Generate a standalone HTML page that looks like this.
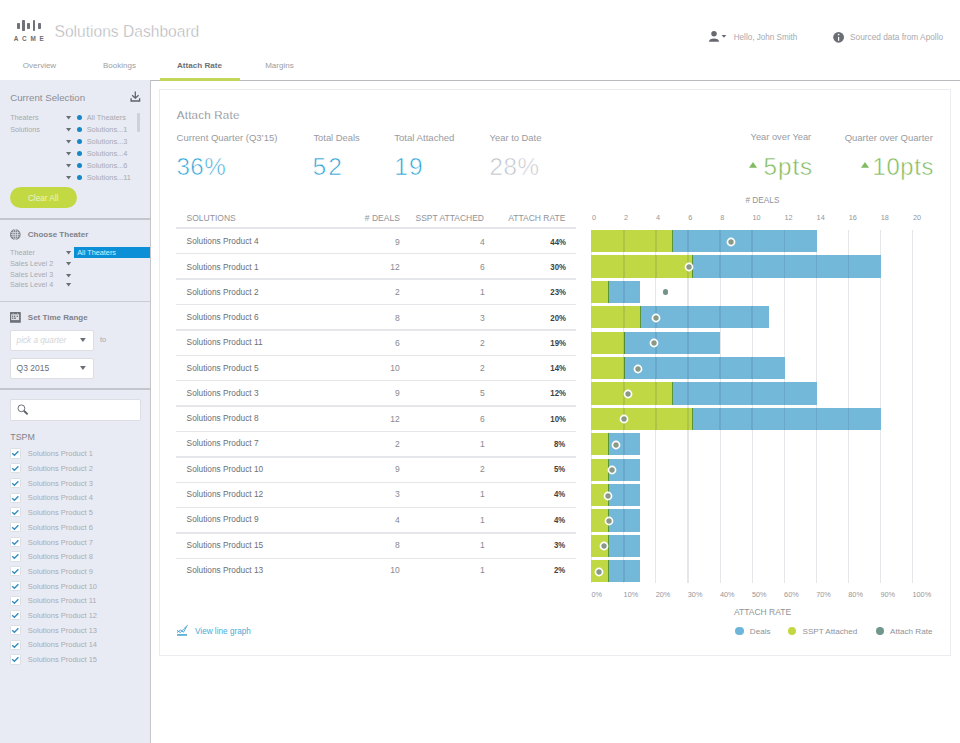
<!DOCTYPE html>
<html><head><meta charset="utf-8"><title>Solutions Dashboard</title>
<style>
html,body{margin:0;padding:0;}
body{width:960px;height:743px;position:relative;overflow:hidden;background:#fff;font-family:"Liberation Sans", sans-serif;}
.t{position:absolute;white-space:nowrap;}
</style></head><body>
<div style="position:absolute;left:17.1px;top:22.5px;width:2.7px;height:6.300000000000001px;background:#707379;border-radius:0.8px;"></div>
<div style="position:absolute;left:22.3px;top:20px;width:2.7px;height:11.3px;background:#707379;border-radius:0.8px;"></div>
<div style="position:absolute;left:27.4px;top:22.5px;width:2.7px;height:6.300000000000001px;background:#707379;border-radius:0.8px;"></div>
<div style="position:absolute;left:32.7px;top:20px;width:2.7px;height:11.3px;background:#707379;border-radius:0.8px;"></div>
<div style="position:absolute;left:37.9px;top:22.5px;width:2.7px;height:6.300000000000001px;background:#707379;border-radius:0.8px;"></div>
<div class="t" style="left:13.70px;top:36.19px;font-size:6.4px;line-height:6.4px;color:#6b6e75;font-weight:700;letter-spacing:3.75px;">ACME</div>
<div class="t" style="left:54.50px;top:24.12px;font-size:15.6px;line-height:15.6px;color:#a9abb2;font-weight:400;-webkit-text-stroke:0.45px #fff;">Solutions Dashboard</div>
<svg style="position:absolute;left:706px;top:29px" width="24" height="15" viewBox="0 0 24 15"><circle cx="8" cy="4.8" r="2.75" fill="#66696f"/><path d="M3 12.7 C3 10.4 5.2 9.5 8 9.5 C10.8 9.5 13 10.4 13 12.7 Z" fill="#66696f"/><path d="M15.6 6 L20.3 6 L17.95 8.8 Z" fill="#66696f"/></svg>
<div class="t" style="left:733.70px;top:34.01px;font-size:8.15px;line-height:8.15px;color:#a7aaaf;font-weight:400;">Hello, John Smith</div>
<svg style="position:absolute;left:832px;top:31px" width="13" height="13" viewBox="0 0 13 13"><circle cx="6.6" cy="6.3" r="5.4" fill="#6b6e75"/><circle cx="6.6" cy="3.5" r="0.85" fill="#fff"/><rect x="6.0" y="5.9" width="1.2" height="3.9" fill="#fff"/></svg>
<div class="t" style="left:850.00px;top:32.89px;font-size:8.3px;line-height:8.3px;color:#a7aaaf;font-weight:400;">Sourced data from Apollo</div>
<div class="t" style="left:22.80px;top:62.24px;font-size:8px;line-height:8px;color:#9b9ea4;font-weight:400;">Overview</div>
<div class="t" style="left:103.00px;top:62.24px;font-size:8px;line-height:8px;color:#9b9ea4;font-weight:400;">Bookings</div>
<div class="t" style="left:177.00px;top:62.16px;font-size:8.1px;line-height:8.1px;color:#6d7077;font-weight:700;">Attach Rate</div>
<div class="t" style="left:265.20px;top:62.24px;font-size:8px;line-height:8px;color:#9b9ea4;font-weight:400;">Margins</div>
<div style="position:absolute;left:150px;top:80px;width:810px;height:1px;background:#b9bbbf;"></div>
<div style="position:absolute;left:160px;top:78px;width:80px;height:3px;background:#c2d65a;"></div>
<div style="position:absolute;left:0px;top:80px;width:150px;height:663px;background:#e8ebf3;"></div>
<div style="position:absolute;left:150px;top:80px;width:1px;height:663px;background:#c3c5cb;"></div>
<div class="t" style="left:10.20px;top:92.70px;font-size:9.7px;line-height:9.7px;color:#8b8e95;font-weight:400;">Current Selection</div>
<svg style="position:absolute;left:129px;top:91px" width="14" height="12" viewBox="0 0 14 12"><path d="M6.3 0.4 V7.1 M3.1 4.3 L6.3 7.2 L9.6 4.3" stroke="#5f6269" stroke-width="1.25" fill="none"/><path d="M2.1 7.3 V10 H10.6 V7.3" stroke="#5f6269" stroke-width="1.35" fill="none"/></svg>
<div class="t" style="left:10.20px;top:113.62px;font-size:7.2px;line-height:7.2px;color:#a7aab1;font-weight:400;">Theaters</div>
<svg style="position:absolute;left:66px;top:115.90px" width="6" height="4" viewBox="0 0 6 4"><path d="M0 0 H5.2 L2.6 3.5 Z" fill="#6b6e75"/></svg>
<div style="position:absolute;left:77.2px;top:114.60px;width:5px;height:5px;border-radius:50%;background:#1586c8"></div>
<div class="t" style="left:86.70px;top:114.05px;font-size:7.4px;line-height:7.4px;color:#a7aab1;font-weight:400;">All Theaters</div>
<div class="t" style="left:10.20px;top:125.62px;font-size:7.2px;line-height:7.2px;color:#a7aab1;font-weight:400;">Solutions</div>
<svg style="position:absolute;left:66px;top:127.90px" width="6" height="4" viewBox="0 0 6 4"><path d="M0 0 H5.2 L2.6 3.5 Z" fill="#6b6e75"/></svg>
<div style="position:absolute;left:77.2px;top:126.60px;width:5px;height:5px;border-radius:50%;background:#1586c8"></div>
<div class="t" style="left:86.70px;top:126.05px;font-size:7.4px;line-height:7.4px;color:#a7aab1;font-weight:400;">Solutions...1</div>
<svg style="position:absolute;left:66px;top:139.90px" width="6" height="4" viewBox="0 0 6 4"><path d="M0 0 H5.2 L2.6 3.5 Z" fill="#6b6e75"/></svg>
<div style="position:absolute;left:77.2px;top:138.60px;width:5px;height:5px;border-radius:50%;background:#1586c8"></div>
<div class="t" style="left:86.70px;top:138.05px;font-size:7.4px;line-height:7.4px;color:#a7aab1;font-weight:400;">Solutions...3</div>
<svg style="position:absolute;left:66px;top:151.90px" width="6" height="4" viewBox="0 0 6 4"><path d="M0 0 H5.2 L2.6 3.5 Z" fill="#6b6e75"/></svg>
<div style="position:absolute;left:77.2px;top:150.60px;width:5px;height:5px;border-radius:50%;background:#1586c8"></div>
<div class="t" style="left:86.70px;top:150.05px;font-size:7.4px;line-height:7.4px;color:#a7aab1;font-weight:400;">Solutions...4</div>
<svg style="position:absolute;left:66px;top:163.90px" width="6" height="4" viewBox="0 0 6 4"><path d="M0 0 H5.2 L2.6 3.5 Z" fill="#6b6e75"/></svg>
<div style="position:absolute;left:77.2px;top:162.60px;width:5px;height:5px;border-radius:50%;background:#1586c8"></div>
<div class="t" style="left:86.70px;top:162.05px;font-size:7.4px;line-height:7.4px;color:#a7aab1;font-weight:400;">Solutions...6</div>
<svg style="position:absolute;left:66px;top:175.90px" width="6" height="4" viewBox="0 0 6 4"><path d="M0 0 H5.2 L2.6 3.5 Z" fill="#6b6e75"/></svg>
<div style="position:absolute;left:77.2px;top:174.60px;width:5px;height:5px;border-radius:50%;background:#1586c8"></div>
<div class="t" style="left:86.70px;top:174.05px;font-size:7.4px;line-height:7.4px;color:#a7aab1;font-weight:400;">Solutions...11</div>
<div style="position:absolute;left:137.2px;top:113px;width:2.6px;height:19px;background:#cfd1d6;border-radius:1px;"></div>
<div style="position:absolute;left:9.7px;top:187px;width:67px;height:21px;background:#c3d944;border-radius:11px;"></div>
<div class="t" style="left:-156.80px;width:400px;text-align:center;top:195.07px;font-size:8.2px;line-height:8.2px;color:#eef3c2;font-weight:400;">Clear All</div>
<div style="position:absolute;left:0px;top:218px;width:150px;height:2px;background:#c3c6cd;"></div>
<svg style="position:absolute;left:9px;top:228px" width="13" height="13" viewBox="0 0 13 13"><circle cx="6.3" cy="6.4" r="5.3" fill="#777a81"/><path d="M2.2 4.6 H10.4 M1.6 6.4 H11 M2.2 8.2 H10.4 M6.3 1.2 V11.6" stroke="#e8ebf3" stroke-width="0.7" fill="none"/><ellipse cx="6.3" cy="6.4" rx="2.4" ry="5" stroke="#e8ebf3" stroke-width="0.7" fill="none"/></svg>
<div class="t" style="left:27.80px;top:231.14px;font-size:8px;line-height:8px;color:#7f828a;font-weight:700;">Choose Theater</div>
<div style="position:absolute;left:74px;top:247px;width:76px;height:11px;background:#0b8fd6;"></div>
<div class="t" style="left:77.20px;top:249.03px;font-size:7.3px;line-height:7.3px;color:#d2effc;font-weight:400;">All Theaters</div>
<div class="t" style="left:10.00px;top:248.72px;font-size:7.2px;line-height:7.2px;color:#a7aab1;font-weight:400;">Theater</div>
<svg style="position:absolute;left:66px;top:251.00px" width="6" height="4" viewBox="0 0 6 4"><path d="M0 0 H5.2 L2.6 3.5 Z" fill="#6b6e75"/></svg>
<div class="t" style="left:10.00px;top:259.52px;font-size:7.2px;line-height:7.2px;color:#a7aab1;font-weight:400;">Sales Level 2</div>
<svg style="position:absolute;left:66px;top:261.80px" width="6" height="4" viewBox="0 0 6 4"><path d="M0 0 H5.2 L2.6 3.5 Z" fill="#6b6e75"/></svg>
<div class="t" style="left:10.00px;top:271.32px;font-size:7.2px;line-height:7.2px;color:#a7aab1;font-weight:400;">Sales Level 3</div>
<svg style="position:absolute;left:66px;top:273.60px" width="6" height="4" viewBox="0 0 6 4"><path d="M0 0 H5.2 L2.6 3.5 Z" fill="#6b6e75"/></svg>
<div class="t" style="left:10.00px;top:280.52px;font-size:7.2px;line-height:7.2px;color:#a7aab1;font-weight:400;">Sales Level 4</div>
<svg style="position:absolute;left:66px;top:282.80px" width="6" height="4" viewBox="0 0 6 4"><path d="M0 0 H5.2 L2.6 3.5 Z" fill="#6b6e75"/></svg>
<div style="position:absolute;left:0px;top:300.5px;width:150px;height:1.5px;background:#c8cbd2;"></div>
<svg style="position:absolute;left:10px;top:311.75px" width="11" height="11" viewBox="0 0 11 11"><rect x="0" y="0" width="10.8" height="10.75" rx="0.6" fill="#6d7077"/><rect x="1.2" y="2.3" width="7.9" height="5.8" fill="#dfe1e7"/><rect x="2.0" y="3.6" width="1.3" height="1.3" fill="#6d7077"/><rect x="4.0" y="3.6" width="1.3" height="1.3" fill="#6d7077"/><rect x="6.6" y="3.6" width="1.3" height="1.3" fill="#6d7077"/><rect x="2.0" y="5.6" width="1.3" height="1.3" fill="#6d7077"/><rect x="4.0" y="5.6" width="2.0" height="1.2" fill="#6d7077"/><rect x="2.8" y="0.9" width="0.8" height="1.0" fill="#b9bcc2"/><rect x="7.2" y="0.9" width="0.8" height="1.0" fill="#b9bcc2"/></svg>
<div class="t" style="left:27.80px;top:313.84px;font-size:8px;line-height:8px;color:#7f828a;font-weight:700;">Set Time Range</div>
<div style="position:absolute;left:10px;top:329.5px;width:83.5px;height:21px;background:#ffffff;border:1px solid #dcdee3;box-sizing:border-box;border-radius:2px;"></div>
<div class="t" style="left:16.60px;top:337.07px;font-size:8.2px;line-height:8.2px;color:#d3d4d8;font-weight:400;font-style:italic;">pick a quarter</div>
<svg style="position:absolute;left:80.4px;top:338px" width="6" height="5" viewBox="0 0 6 5"><path d="M0 0 H5.8 L2.9 4 Z" fill="#6b6e75"/></svg>
<div class="t" style="left:100.00px;top:335.86px;font-size:7.5px;line-height:7.5px;color:#a7aab1;font-weight:400;">to</div>
<div style="position:absolute;left:10px;top:357.5px;width:83.5px;height:21px;background:#ffffff;border:1px solid #dcdee3;box-sizing:border-box;border-radius:2px;"></div>
<div class="t" style="left:16.60px;top:364.02px;font-size:8.5px;line-height:8.5px;color:#6b6e75;font-weight:400;">Q3 2015</div>
<svg style="position:absolute;left:80.4px;top:366px" width="6" height="5" viewBox="0 0 6 5"><path d="M0 0 H5.8 L2.9 4 Z" fill="#6b6e75"/></svg>
<div style="position:absolute;left:0px;top:388px;width:150px;height:2px;background:#c3c6cd;"></div>
<div style="position:absolute;left:10px;top:399px;width:130.5px;height:21.5px;background:#ffffff;border:1px solid #dcdee3;box-sizing:border-box;border-radius:2px;"></div>
<svg style="position:absolute;left:16px;top:404px" width="13" height="12" viewBox="0 0 13 12"><circle cx="5.4" cy="4.3" r="3.4" stroke="#5e6168" stroke-width="0.9" fill="none"/><path d="M7.9 6.8 L11.6 10.4" stroke="#5e6168" stroke-width="1.9"/></svg>
<div class="t" style="left:10.30px;top:432.82px;font-size:8.85px;line-height:8.85px;color:#7f828a;font-weight:400;">TSPM</div>
<div style="position:absolute;left:10.1px;top:448.40000000000003px;width:10.6px;height:10.2px;background:#ffffff;border:1px solid #dcdee4;box-sizing:border-box;border-radius:1.5px;"></div>
<svg style="position:absolute;left:10.3px;top:448.40px" width="10" height="10" viewBox="0 0 10 10"><path d="M2.2 5.2 L4.4 7.3 L8.4 3.2" stroke="#2e8cc0" stroke-width="1.3" fill="none"/></svg>
<div class="t" style="left:27.80px;top:450.26px;font-size:7.5px;line-height:7.5px;color:#a9acb3;font-weight:400;">Solutions Product 1</div>
<div style="position:absolute;left:10.1px;top:463.11px;width:10.6px;height:10.2px;background:#ffffff;border:1px solid #dcdee4;box-sizing:border-box;border-radius:1.5px;"></div>
<svg style="position:absolute;left:10.3px;top:463.11px" width="10" height="10" viewBox="0 0 10 10"><path d="M2.2 5.2 L4.4 7.3 L8.4 3.2" stroke="#2e8cc0" stroke-width="1.3" fill="none"/></svg>
<div class="t" style="left:27.80px;top:464.97px;font-size:7.5px;line-height:7.5px;color:#a9acb3;font-weight:400;">Solutions Product 2</div>
<div style="position:absolute;left:10.1px;top:477.82000000000005px;width:10.6px;height:10.2px;background:#ffffff;border:1px solid #dcdee4;box-sizing:border-box;border-radius:1.5px;"></div>
<svg style="position:absolute;left:10.3px;top:477.82px" width="10" height="10" viewBox="0 0 10 10"><path d="M2.2 5.2 L4.4 7.3 L8.4 3.2" stroke="#2e8cc0" stroke-width="1.3" fill="none"/></svg>
<div class="t" style="left:27.80px;top:479.68px;font-size:7.5px;line-height:7.5px;color:#a9acb3;font-weight:400;">Solutions Product 3</div>
<div style="position:absolute;left:10.1px;top:492.53000000000003px;width:10.6px;height:10.2px;background:#ffffff;border:1px solid #dcdee4;box-sizing:border-box;border-radius:1.5px;"></div>
<svg style="position:absolute;left:10.3px;top:492.53px" width="10" height="10" viewBox="0 0 10 10"><path d="M2.2 5.2 L4.4 7.3 L8.4 3.2" stroke="#2e8cc0" stroke-width="1.3" fill="none"/></svg>
<div class="t" style="left:27.80px;top:494.39px;font-size:7.5px;line-height:7.5px;color:#a9acb3;font-weight:400;">Solutions Product 4</div>
<div style="position:absolute;left:10.1px;top:507.24000000000007px;width:10.6px;height:10.2px;background:#ffffff;border:1px solid #dcdee4;box-sizing:border-box;border-radius:1.5px;"></div>
<svg style="position:absolute;left:10.3px;top:507.24px" width="10" height="10" viewBox="0 0 10 10"><path d="M2.2 5.2 L4.4 7.3 L8.4 3.2" stroke="#2e8cc0" stroke-width="1.3" fill="none"/></svg>
<div class="t" style="left:27.80px;top:509.10px;font-size:7.5px;line-height:7.5px;color:#a9acb3;font-weight:400;">Solutions Product 5</div>
<div style="position:absolute;left:10.1px;top:521.95px;width:10.6px;height:10.2px;background:#ffffff;border:1px solid #dcdee4;box-sizing:border-box;border-radius:1.5px;"></div>
<svg style="position:absolute;left:10.3px;top:521.95px" width="10" height="10" viewBox="0 0 10 10"><path d="M2.2 5.2 L4.4 7.3 L8.4 3.2" stroke="#2e8cc0" stroke-width="1.3" fill="none"/></svg>
<div class="t" style="left:27.80px;top:523.81px;font-size:7.5px;line-height:7.5px;color:#a9acb3;font-weight:400;">Solutions Product 6</div>
<div style="position:absolute;left:10.1px;top:536.66px;width:10.6px;height:10.2px;background:#ffffff;border:1px solid #dcdee4;box-sizing:border-box;border-radius:1.5px;"></div>
<svg style="position:absolute;left:10.3px;top:536.66px" width="10" height="10" viewBox="0 0 10 10"><path d="M2.2 5.2 L4.4 7.3 L8.4 3.2" stroke="#2e8cc0" stroke-width="1.3" fill="none"/></svg>
<div class="t" style="left:27.80px;top:538.52px;font-size:7.5px;line-height:7.5px;color:#a9acb3;font-weight:400;">Solutions Product 7</div>
<div style="position:absolute;left:10.1px;top:551.37px;width:10.6px;height:10.2px;background:#ffffff;border:1px solid #dcdee4;box-sizing:border-box;border-radius:1.5px;"></div>
<svg style="position:absolute;left:10.3px;top:551.37px" width="10" height="10" viewBox="0 0 10 10"><path d="M2.2 5.2 L4.4 7.3 L8.4 3.2" stroke="#2e8cc0" stroke-width="1.3" fill="none"/></svg>
<div class="t" style="left:27.80px;top:553.23px;font-size:7.5px;line-height:7.5px;color:#a9acb3;font-weight:400;">Solutions Product 8</div>
<div style="position:absolute;left:10.1px;top:566.0799999999999px;width:10.6px;height:10.2px;background:#ffffff;border:1px solid #dcdee4;box-sizing:border-box;border-radius:1.5px;"></div>
<svg style="position:absolute;left:10.3px;top:566.08px" width="10" height="10" viewBox="0 0 10 10"><path d="M2.2 5.2 L4.4 7.3 L8.4 3.2" stroke="#2e8cc0" stroke-width="1.3" fill="none"/></svg>
<div class="t" style="left:27.80px;top:567.94px;font-size:7.5px;line-height:7.5px;color:#a9acb3;font-weight:400;">Solutions Product 9</div>
<div style="position:absolute;left:10.1px;top:580.79px;width:10.6px;height:10.2px;background:#ffffff;border:1px solid #dcdee4;box-sizing:border-box;border-radius:1.5px;"></div>
<svg style="position:absolute;left:10.3px;top:580.79px" width="10" height="10" viewBox="0 0 10 10"><path d="M2.2 5.2 L4.4 7.3 L8.4 3.2" stroke="#2e8cc0" stroke-width="1.3" fill="none"/></svg>
<div class="t" style="left:27.80px;top:582.65px;font-size:7.5px;line-height:7.5px;color:#a9acb3;font-weight:400;">Solutions Product 10</div>
<div style="position:absolute;left:10.1px;top:595.5px;width:10.6px;height:10.2px;background:#ffffff;border:1px solid #dcdee4;box-sizing:border-box;border-radius:1.5px;"></div>
<svg style="position:absolute;left:10.3px;top:595.50px" width="10" height="10" viewBox="0 0 10 10"><path d="M2.2 5.2 L4.4 7.3 L8.4 3.2" stroke="#2e8cc0" stroke-width="1.3" fill="none"/></svg>
<div class="t" style="left:27.80px;top:597.36px;font-size:7.5px;line-height:7.5px;color:#a9acb3;font-weight:400;">Solutions Product 11</div>
<div style="position:absolute;left:10.1px;top:610.21px;width:10.6px;height:10.2px;background:#ffffff;border:1px solid #dcdee4;box-sizing:border-box;border-radius:1.5px;"></div>
<svg style="position:absolute;left:10.3px;top:610.21px" width="10" height="10" viewBox="0 0 10 10"><path d="M2.2 5.2 L4.4 7.3 L8.4 3.2" stroke="#2e8cc0" stroke-width="1.3" fill="none"/></svg>
<div class="t" style="left:27.80px;top:612.07px;font-size:7.5px;line-height:7.5px;color:#a9acb3;font-weight:400;">Solutions Product 12</div>
<div style="position:absolute;left:10.1px;top:624.92px;width:10.6px;height:10.2px;background:#ffffff;border:1px solid #dcdee4;box-sizing:border-box;border-radius:1.5px;"></div>
<svg style="position:absolute;left:10.3px;top:624.92px" width="10" height="10" viewBox="0 0 10 10"><path d="M2.2 5.2 L4.4 7.3 L8.4 3.2" stroke="#2e8cc0" stroke-width="1.3" fill="none"/></svg>
<div class="t" style="left:27.80px;top:626.78px;font-size:7.5px;line-height:7.5px;color:#a9acb3;font-weight:400;">Solutions Product 13</div>
<div style="position:absolute;left:10.1px;top:639.63px;width:10.6px;height:10.2px;background:#ffffff;border:1px solid #dcdee4;box-sizing:border-box;border-radius:1.5px;"></div>
<svg style="position:absolute;left:10.3px;top:639.63px" width="10" height="10" viewBox="0 0 10 10"><path d="M2.2 5.2 L4.4 7.3 L8.4 3.2" stroke="#2e8cc0" stroke-width="1.3" fill="none"/></svg>
<div class="t" style="left:27.80px;top:641.49px;font-size:7.5px;line-height:7.5px;color:#a9acb3;font-weight:400;">Solutions Product 14</div>
<div style="position:absolute;left:10.1px;top:654.3399999999999px;width:10.6px;height:10.2px;background:#ffffff;border:1px solid #dcdee4;box-sizing:border-box;border-radius:1.5px;"></div>
<svg style="position:absolute;left:10.3px;top:654.34px" width="10" height="10" viewBox="0 0 10 10"><path d="M2.2 5.2 L4.4 7.3 L8.4 3.2" stroke="#2e8cc0" stroke-width="1.3" fill="none"/></svg>
<div class="t" style="left:27.80px;top:656.20px;font-size:7.5px;line-height:7.5px;color:#a9acb3;font-weight:400;">Solutions Product 15</div>
<div style="position:absolute;left:159px;top:89px;width:792px;height:567px;background:#ffffff;border:1px solid #ebecef;box-sizing:border-box;"></div>
<div class="t" style="left:176.80px;top:109.30px;font-size:11.6px;line-height:11.6px;color:#737680;font-weight:400;-webkit-text-stroke:0.25px #fff;letter-spacing:0.2px;">Attach Rate</div>
<div class="t" style="left:176.60px;top:133.27px;font-size:9.5px;line-height:9.5px;color:#989ba1;font-weight:400;">Current Quarter (Q3&#8217;15)</div>
<div class="t" style="left:313.40px;top:133.36px;font-size:9.4px;line-height:9.4px;color:#989ba1;font-weight:400;">Total Deals</div>
<div class="t" style="left:394.20px;top:133.19px;font-size:9.6px;line-height:9.6px;color:#989ba1;font-weight:400;">Total Attached</div>
<div class="t" style="left:489.60px;top:133.36px;font-size:9.4px;line-height:9.4px;color:#989ba1;font-weight:400;">Year to Date</div>
<div class="t" style="right:148.80px;top:133.44px;font-size:9.3px;line-height:9.3px;color:#989ba1;font-weight:400;">Year over Year</div>
<div class="t" style="right:27.20px;top:133.27px;font-size:9.5px;line-height:9.5px;color:#989ba1;font-weight:400;">Quarter over Quarter</div>
<div class="t" style="left:176.40px;top:155.45px;font-size:24.2px;line-height:24.2px;color:#2ea3d6;font-weight:400;-webkit-text-stroke:0.65px #fff;letter-spacing:0.5px;">36%</div>
<div class="t" style="left:312.40px;top:155.11px;font-size:24.6px;line-height:24.6px;color:#2ea3d6;font-weight:400;-webkit-text-stroke:0.65px #fff;letter-spacing:2.2px;">52</div>
<div class="t" style="left:394.20px;top:155.11px;font-size:24.6px;line-height:24.6px;color:#2ea3d6;font-weight:400;-webkit-text-stroke:0.65px #fff;letter-spacing:1.2px;">19</div>
<div class="t" style="left:489.50px;top:155.45px;font-size:24.2px;line-height:24.2px;color:#bec1c7;font-weight:400;-webkit-text-stroke:0.65px #fff;letter-spacing:0.6px;">28%</div>
<div class="t" style="left:763.60px;top:154.97px;font-size:24.3px;line-height:24.3px;color:#80bb60;font-weight:400;-webkit-text-stroke:0.5px #fff;letter-spacing:0.9px;">5pts</div>
<div class="t" style="left:872.60px;top:155.39px;font-size:23.8px;line-height:23.8px;color:#80bb60;font-weight:400;-webkit-text-stroke:0.5px #fff;letter-spacing:0.65px;">10pts</div>
<svg style="position:absolute;left:749px;top:162px" width="9" height="6" viewBox="0 0 9 6"><path d="M0 5.8 H8 L4 0 Z" fill="#80bb60"/></svg>
<svg style="position:absolute;left:861.3px;top:162px" width="9" height="6" viewBox="0 0 9 6"><path d="M0 5.8 H8 L4 0 Z" fill="#80bb60"/></svg>
<div class="t" style="left:186.60px;top:214.12px;font-size:8.5px;line-height:8.5px;color:#909399;font-weight:400;">SOLUTIONS</div>
<div class="t" style="right:560.20px;top:214.12px;font-size:8.5px;line-height:8.5px;color:#909399;font-weight:400;"># DEALS</div>
<div class="t" style="right:476.00px;top:214.12px;font-size:8.5px;line-height:8.5px;color:#909399;font-weight:400;">SSPT ATTACHED</div>
<div class="t" style="right:394.60px;top:214.12px;font-size:8.5px;line-height:8.5px;color:#909399;font-weight:400;">ATTACH RATE</div>
<div style="position:absolute;left:176px;top:227px;width:400px;height:2px;background:#e4e6eb;"></div>
<div class="t" style="left:186.60px;top:237.39px;font-size:8.3px;line-height:8.3px;color:#6c6f75;font-weight:400;">Solutions Product 4</div>
<div class="t" style="right:560.20px;top:237.82px;font-size:8.5px;line-height:8.5px;color:#86898f;font-weight:400;">9</div>
<div class="t" style="right:475.40px;top:237.82px;font-size:8.5px;line-height:8.5px;color:#86898f;font-weight:400;">4</div>
<div class="t" style="right:394.40px;top:237.82px;font-size:8.5px;line-height:8.5px;color:#3d3f44;font-weight:700;transform:scaleX(0.92);transform-origin:100% 50%;">44%</div>
<div style="position:absolute;left:176px;top:253.1px;width:400px;height:1.4px;background:#e5e6ea;"></div>
<div class="t" style="left:186.60px;top:262.65px;font-size:8.3px;line-height:8.3px;color:#6c6f75;font-weight:400;">Solutions Product 1</div>
<div class="t" style="right:560.20px;top:263.08px;font-size:8.5px;line-height:8.5px;color:#86898f;font-weight:400;">12</div>
<div class="t" style="right:475.40px;top:263.08px;font-size:8.5px;line-height:8.5px;color:#86898f;font-weight:400;">6</div>
<div class="t" style="right:394.40px;top:263.08px;font-size:8.5px;line-height:8.5px;color:#3d3f44;font-weight:700;transform:scaleX(0.92);transform-origin:100% 50%;">30%</div>
<div style="position:absolute;left:176px;top:278.49px;width:400px;height:1.4px;background:#e5e6ea;"></div>
<div class="t" style="left:186.60px;top:287.91px;font-size:8.3px;line-height:8.3px;color:#6c6f75;font-weight:400;">Solutions Product 2</div>
<div class="t" style="right:560.20px;top:288.34px;font-size:8.5px;line-height:8.5px;color:#86898f;font-weight:400;">2</div>
<div class="t" style="right:475.40px;top:288.34px;font-size:8.5px;line-height:8.5px;color:#86898f;font-weight:400;">1</div>
<div class="t" style="right:394.40px;top:288.34px;font-size:8.5px;line-height:8.5px;color:#3d3f44;font-weight:700;transform:scaleX(0.92);transform-origin:100% 50%;">23%</div>
<div style="position:absolute;left:176px;top:303.88px;width:400px;height:1.4px;background:#e5e6ea;"></div>
<div class="t" style="left:186.60px;top:313.17px;font-size:8.3px;line-height:8.3px;color:#6c6f75;font-weight:400;">Solutions Product 6</div>
<div class="t" style="right:560.20px;top:313.60px;font-size:8.5px;line-height:8.5px;color:#86898f;font-weight:400;">8</div>
<div class="t" style="right:475.40px;top:313.60px;font-size:8.5px;line-height:8.5px;color:#86898f;font-weight:400;">3</div>
<div class="t" style="right:394.40px;top:313.60px;font-size:8.5px;line-height:8.5px;color:#3d3f44;font-weight:700;transform:scaleX(0.92);transform-origin:100% 50%;">20%</div>
<div style="position:absolute;left:176px;top:329.27px;width:400px;height:1.4px;background:#e5e6ea;"></div>
<div class="t" style="left:186.60px;top:338.43px;font-size:8.3px;line-height:8.3px;color:#6c6f75;font-weight:400;">Solutions Product 11</div>
<div class="t" style="right:560.20px;top:338.86px;font-size:8.5px;line-height:8.5px;color:#86898f;font-weight:400;">6</div>
<div class="t" style="right:475.40px;top:338.86px;font-size:8.5px;line-height:8.5px;color:#86898f;font-weight:400;">2</div>
<div class="t" style="right:394.40px;top:338.86px;font-size:8.5px;line-height:8.5px;color:#3d3f44;font-weight:700;transform:scaleX(0.92);transform-origin:100% 50%;">19%</div>
<div style="position:absolute;left:176px;top:354.65999999999997px;width:400px;height:1.4px;background:#e5e6ea;"></div>
<div class="t" style="left:186.60px;top:363.69px;font-size:8.3px;line-height:8.3px;color:#6c6f75;font-weight:400;">Solutions Product 5</div>
<div class="t" style="right:560.20px;top:364.12px;font-size:8.5px;line-height:8.5px;color:#86898f;font-weight:400;">10</div>
<div class="t" style="right:475.40px;top:364.12px;font-size:8.5px;line-height:8.5px;color:#86898f;font-weight:400;">2</div>
<div class="t" style="right:394.40px;top:364.12px;font-size:8.5px;line-height:8.5px;color:#3d3f44;font-weight:700;transform:scaleX(0.92);transform-origin:100% 50%;">14%</div>
<div style="position:absolute;left:176px;top:380.05px;width:400px;height:1.4px;background:#e5e6ea;"></div>
<div class="t" style="left:186.60px;top:388.95px;font-size:8.3px;line-height:8.3px;color:#6c6f75;font-weight:400;">Solutions Product 3</div>
<div class="t" style="right:560.20px;top:389.38px;font-size:8.5px;line-height:8.5px;color:#86898f;font-weight:400;">9</div>
<div class="t" style="right:475.40px;top:389.38px;font-size:8.5px;line-height:8.5px;color:#86898f;font-weight:400;">5</div>
<div class="t" style="right:394.40px;top:389.38px;font-size:8.5px;line-height:8.5px;color:#3d3f44;font-weight:700;transform:scaleX(0.92);transform-origin:100% 50%;">12%</div>
<div style="position:absolute;left:176px;top:405.44px;width:400px;height:1.4px;background:#e5e6ea;"></div>
<div class="t" style="left:186.60px;top:414.21px;font-size:8.3px;line-height:8.3px;color:#6c6f75;font-weight:400;">Solutions Product 8</div>
<div class="t" style="right:560.20px;top:414.64px;font-size:8.5px;line-height:8.5px;color:#86898f;font-weight:400;">12</div>
<div class="t" style="right:475.40px;top:414.64px;font-size:8.5px;line-height:8.5px;color:#86898f;font-weight:400;">6</div>
<div class="t" style="right:394.40px;top:414.64px;font-size:8.5px;line-height:8.5px;color:#3d3f44;font-weight:700;transform:scaleX(0.92);transform-origin:100% 50%;">10%</div>
<div style="position:absolute;left:176px;top:430.83000000000004px;width:400px;height:1.4px;background:#e5e6ea;"></div>
<div class="t" style="left:186.60px;top:439.47px;font-size:8.3px;line-height:8.3px;color:#6c6f75;font-weight:400;">Solutions Product 7</div>
<div class="t" style="right:560.20px;top:439.90px;font-size:8.5px;line-height:8.5px;color:#86898f;font-weight:400;">2</div>
<div class="t" style="right:475.40px;top:439.90px;font-size:8.5px;line-height:8.5px;color:#86898f;font-weight:400;">1</div>
<div class="t" style="right:394.40px;top:439.90px;font-size:8.5px;line-height:8.5px;color:#3d3f44;font-weight:700;transform:scaleX(0.92);transform-origin:100% 50%;">8%</div>
<div style="position:absolute;left:176px;top:456.22px;width:400px;height:1.4px;background:#e5e6ea;"></div>
<div class="t" style="left:186.60px;top:464.73px;font-size:8.3px;line-height:8.3px;color:#6c6f75;font-weight:400;">Solutions Product 10</div>
<div class="t" style="right:560.20px;top:465.16px;font-size:8.5px;line-height:8.5px;color:#86898f;font-weight:400;">9</div>
<div class="t" style="right:475.40px;top:465.16px;font-size:8.5px;line-height:8.5px;color:#86898f;font-weight:400;">2</div>
<div class="t" style="right:394.40px;top:465.16px;font-size:8.5px;line-height:8.5px;color:#3d3f44;font-weight:700;transform:scaleX(0.92);transform-origin:100% 50%;">5%</div>
<div style="position:absolute;left:176px;top:481.61px;width:400px;height:1.4px;background:#e5e6ea;"></div>
<div class="t" style="left:186.60px;top:489.99px;font-size:8.3px;line-height:8.3px;color:#6c6f75;font-weight:400;">Solutions Product 12</div>
<div class="t" style="right:560.20px;top:490.42px;font-size:8.5px;line-height:8.5px;color:#86898f;font-weight:400;">3</div>
<div class="t" style="right:475.40px;top:490.42px;font-size:8.5px;line-height:8.5px;color:#86898f;font-weight:400;">1</div>
<div class="t" style="right:394.40px;top:490.42px;font-size:8.5px;line-height:8.5px;color:#3d3f44;font-weight:700;transform:scaleX(0.92);transform-origin:100% 50%;">4%</div>
<div style="position:absolute;left:176px;top:507.0px;width:400px;height:1.4px;background:#e5e6ea;"></div>
<div class="t" style="left:186.60px;top:515.25px;font-size:8.3px;line-height:8.3px;color:#6c6f75;font-weight:400;">Solutions Product 9</div>
<div class="t" style="right:560.20px;top:515.68px;font-size:8.5px;line-height:8.5px;color:#86898f;font-weight:400;">4</div>
<div class="t" style="right:475.40px;top:515.68px;font-size:8.5px;line-height:8.5px;color:#86898f;font-weight:400;">1</div>
<div class="t" style="right:394.40px;top:515.68px;font-size:8.5px;line-height:8.5px;color:#3d3f44;font-weight:700;transform:scaleX(0.92);transform-origin:100% 50%;">4%</div>
<div style="position:absolute;left:176px;top:532.39px;width:400px;height:1.4px;background:#e5e6ea;"></div>
<div class="t" style="left:186.60px;top:540.51px;font-size:8.3px;line-height:8.3px;color:#6c6f75;font-weight:400;">Solutions Product 15</div>
<div class="t" style="right:560.20px;top:540.94px;font-size:8.5px;line-height:8.5px;color:#86898f;font-weight:400;">8</div>
<div class="t" style="right:475.40px;top:540.94px;font-size:8.5px;line-height:8.5px;color:#86898f;font-weight:400;">1</div>
<div class="t" style="right:394.40px;top:540.94px;font-size:8.5px;line-height:8.5px;color:#3d3f44;font-weight:700;transform:scaleX(0.92);transform-origin:100% 50%;">3%</div>
<div style="position:absolute;left:176px;top:557.78px;width:400px;height:1.4px;background:#e5e6ea;"></div>
<div class="t" style="left:186.60px;top:565.77px;font-size:8.3px;line-height:8.3px;color:#6c6f75;font-weight:400;">Solutions Product 13</div>
<div class="t" style="right:560.20px;top:566.20px;font-size:8.5px;line-height:8.5px;color:#86898f;font-weight:400;">10</div>
<div class="t" style="right:475.40px;top:566.20px;font-size:8.5px;line-height:8.5px;color:#86898f;font-weight:400;">1</div>
<div class="t" style="right:394.40px;top:566.20px;font-size:8.5px;line-height:8.5px;color:#3d3f44;font-weight:700;transform:scaleX(0.92);transform-origin:100% 50%;">2%</div>
<svg style="position:absolute;left:172px;top:620px" width="20" height="20" viewBox="0 0 20 20"><path d="M5 10.4 L8.3 12.6 L11.5 9.2 L15.8 5 M5 12.6 L8.5 10 L11.5 12.2 L14.6 6.6" stroke="#3f9fcf" stroke-width="0.9" fill="none"/><rect x="5" y="14.2" width="10" height="1.5" fill="#3f9fcf"/></svg>
<div class="t" style="left:195.00px;top:627.67px;font-size:8.2px;line-height:8.2px;color:#4aaad8;font-weight:400;">View line graph</div>
<div class="t" style="left:745.40px;top:196.09px;font-size:8.3px;line-height:8.3px;color:#909399;font-weight:400;"># DEALS</div>
<div class="t" style="left:591.90px;top:214.03px;font-size:7.3px;line-height:7.3px;color:#94979d;font-weight:400;">0</div>
<div style="position:absolute;left:591.1px;top:230px;width:1.2px;height:352.5px;background:#e5e6ea;"></div>
<div class="t" style="left:624.00px;top:214.03px;font-size:7.3px;line-height:7.3px;color:#94979d;font-weight:400;">2</div>
<div style="position:absolute;left:623.2px;top:230px;width:1.2px;height:352.5px;background:#e5e6ea;"></div>
<div class="t" style="left:656.10px;top:214.03px;font-size:7.3px;line-height:7.3px;color:#94979d;font-weight:400;">4</div>
<div style="position:absolute;left:655.3000000000001px;top:230px;width:1.2px;height:352.5px;background:#e5e6ea;"></div>
<div class="t" style="left:688.20px;top:214.03px;font-size:7.3px;line-height:7.3px;color:#94979d;font-weight:400;">6</div>
<div style="position:absolute;left:687.4000000000001px;top:230px;width:1.2px;height:352.5px;background:#e5e6ea;"></div>
<div class="t" style="left:720.30px;top:214.03px;font-size:7.3px;line-height:7.3px;color:#94979d;font-weight:400;">8</div>
<div style="position:absolute;left:719.5px;top:230px;width:1.2px;height:352.5px;background:#e5e6ea;"></div>
<div class="t" style="left:752.40px;top:214.03px;font-size:7.3px;line-height:7.3px;color:#94979d;font-weight:400;">10</div>
<div style="position:absolute;left:751.6px;top:230px;width:1.2px;height:352.5px;background:#e5e6ea;"></div>
<div class="t" style="left:784.50px;top:214.03px;font-size:7.3px;line-height:7.3px;color:#94979d;font-weight:400;">12</div>
<div style="position:absolute;left:783.7px;top:230px;width:1.2px;height:352.5px;background:#e5e6ea;"></div>
<div class="t" style="left:816.60px;top:214.03px;font-size:7.3px;line-height:7.3px;color:#94979d;font-weight:400;">14</div>
<div style="position:absolute;left:815.8000000000001px;top:230px;width:1.2px;height:352.5px;background:#e5e6ea;"></div>
<div class="t" style="left:848.70px;top:214.03px;font-size:7.3px;line-height:7.3px;color:#94979d;font-weight:400;">16</div>
<div style="position:absolute;left:847.9000000000001px;top:230px;width:1.2px;height:352.5px;background:#e5e6ea;"></div>
<div class="t" style="left:880.80px;top:214.03px;font-size:7.3px;line-height:7.3px;color:#94979d;font-weight:400;">18</div>
<div style="position:absolute;left:880.0px;top:230px;width:1.2px;height:352.5px;background:#e5e6ea;"></div>
<div class="t" style="left:912.90px;top:214.03px;font-size:7.3px;line-height:7.3px;color:#94979d;font-weight:400;">20</div>
<div style="position:absolute;left:912.1px;top:230px;width:1.2px;height:352.5px;background:#e5e6ea;"></div>
<div class="t" style="left:591.50px;top:590.83px;font-size:7.3px;line-height:7.3px;color:#94979d;font-weight:400;">0%</div>
<div class="t" style="left:623.60px;top:590.83px;font-size:7.3px;line-height:7.3px;color:#94979d;font-weight:400;">10%</div>
<div class="t" style="left:655.70px;top:590.83px;font-size:7.3px;line-height:7.3px;color:#94979d;font-weight:400;">20%</div>
<div class="t" style="left:687.80px;top:590.83px;font-size:7.3px;line-height:7.3px;color:#94979d;font-weight:400;">30%</div>
<div class="t" style="left:719.90px;top:590.83px;font-size:7.3px;line-height:7.3px;color:#94979d;font-weight:400;">40%</div>
<div class="t" style="left:752.00px;top:590.83px;font-size:7.3px;line-height:7.3px;color:#94979d;font-weight:400;">50%</div>
<div class="t" style="left:784.10px;top:590.83px;font-size:7.3px;line-height:7.3px;color:#94979d;font-weight:400;">60%</div>
<div class="t" style="left:816.20px;top:590.83px;font-size:7.3px;line-height:7.3px;color:#94979d;font-weight:400;">70%</div>
<div class="t" style="left:848.30px;top:590.83px;font-size:7.3px;line-height:7.3px;color:#94979d;font-weight:400;">80%</div>
<div class="t" style="left:880.40px;top:590.83px;font-size:7.3px;line-height:7.3px;color:#94979d;font-weight:400;">90%</div>
<div class="t" style="left:912.50px;top:590.83px;font-size:7.3px;line-height:7.3px;color:#94979d;font-weight:400;">100%</div>
<div style="position:absolute;left:591.20px;top:230.10px;width:80.65px;height:22.2px;background:#c1d845;"></div>
<div style="position:absolute;left:671.85px;top:230.10px;width:145.02px;height:22.2px;background:#74b8d9;"></div>
<div style="position:absolute;left:672px;top:230.10px;width:1px;height:22.2px;background:#5a9639;"></div>
<div style="position:absolute;left:623.00px;top:230.10px;width:1.5px;height:22.2px;background:rgba(30,60,80,0.12);"></div>
<div style="position:absolute;left:655.10px;top:230.10px;width:1.5px;height:22.2px;background:rgba(30,60,80,0.12);"></div>
<div style="position:absolute;left:687.20px;top:230.10px;width:1.5px;height:22.2px;background:rgba(30,60,80,0.12);"></div>
<div style="position:absolute;left:719.30px;top:230.10px;width:1.5px;height:22.2px;background:rgba(30,60,80,0.12);"></div>
<div style="position:absolute;left:751.40px;top:230.10px;width:1.5px;height:22.2px;background:rgba(30,60,80,0.12);"></div>
<div style="position:absolute;left:783.50px;top:230.10px;width:1.5px;height:22.2px;background:rgba(30,60,80,0.12);"></div>
<svg style="position:absolute;left:724.55px;top:235.60px" width="12" height="12" viewBox="0 0 12 12"><circle cx="6" cy="6" r="3.55" fill="#889a86" stroke="#fff" stroke-width="1.7"/></svg>
<div style="position:absolute;left:591.20px;top:255.49px;width:100.87px;height:22.2px;background:#c1d845;"></div>
<div style="position:absolute;left:692.07px;top:255.49px;width:189.12px;height:22.2px;background:#74b8d9;"></div>
<div style="position:absolute;left:692px;top:255.49px;width:1px;height:22.2px;background:#5a9639;"></div>
<div style="position:absolute;left:623.00px;top:255.49px;width:1.5px;height:22.2px;background:rgba(30,60,80,0.12);"></div>
<div style="position:absolute;left:655.10px;top:255.49px;width:1.5px;height:22.2px;background:rgba(30,60,80,0.12);"></div>
<div style="position:absolute;left:687.20px;top:255.49px;width:1.5px;height:22.2px;background:rgba(30,60,80,0.12);"></div>
<div style="position:absolute;left:719.30px;top:255.49px;width:1.5px;height:22.2px;background:rgba(30,60,80,0.12);"></div>
<div style="position:absolute;left:751.40px;top:255.49px;width:1.5px;height:22.2px;background:rgba(30,60,80,0.12);"></div>
<div style="position:absolute;left:783.50px;top:255.49px;width:1.5px;height:22.2px;background:rgba(30,60,80,0.12);"></div>
<div style="position:absolute;left:815.60px;top:255.49px;width:1.5px;height:22.2px;background:rgba(30,60,80,0.12);"></div>
<div style="position:absolute;left:847.70px;top:255.49px;width:1.5px;height:22.2px;background:rgba(30,60,80,0.12);"></div>
<svg style="position:absolute;left:683.14px;top:260.99px" width="12" height="12" viewBox="0 0 12 12"><circle cx="6" cy="6" r="3.55" fill="#889a86" stroke="#fff" stroke-width="1.7"/></svg>
<div style="position:absolute;left:591.20px;top:280.88px;width:16.45px;height:22.2px;background:#c1d845;"></div>
<div style="position:absolute;left:607.65px;top:280.88px;width:32.34px;height:22.2px;background:#74b8d9;"></div>
<div style="position:absolute;left:608px;top:280.88px;width:1px;height:22.2px;background:#5a9639;"></div>
<div style="position:absolute;left:623.00px;top:280.88px;width:1.5px;height:22.2px;background:rgba(30,60,80,0.12);"></div>
<div style="position:absolute;left:662.81px;top:289.48px;width:5.6px;height:5.6px;border-radius:50%;background:#74928a"></div>
<div style="position:absolute;left:591.20px;top:306.27px;width:48.55px;height:22.2px;background:#c1d845;"></div>
<div style="position:absolute;left:639.75px;top:306.27px;width:128.88px;height:22.2px;background:#74b8d9;"></div>
<div style="position:absolute;left:640px;top:306.27px;width:1px;height:22.2px;background:#5a9639;"></div>
<div style="position:absolute;left:623.00px;top:306.27px;width:1.5px;height:22.2px;background:rgba(30,60,80,0.12);"></div>
<div style="position:absolute;left:655.10px;top:306.27px;width:1.5px;height:22.2px;background:rgba(30,60,80,0.12);"></div>
<div style="position:absolute;left:687.20px;top:306.27px;width:1.5px;height:22.2px;background:rgba(30,60,80,0.12);"></div>
<div style="position:absolute;left:719.30px;top:306.27px;width:1.5px;height:22.2px;background:rgba(30,60,80,0.12);"></div>
<div style="position:absolute;left:751.40px;top:306.27px;width:1.5px;height:22.2px;background:rgba(30,60,80,0.12);"></div>
<svg style="position:absolute;left:650.40px;top:311.77px" width="12" height="12" viewBox="0 0 12 12"><circle cx="6" cy="6" r="3.55" fill="#889a86" stroke="#fff" stroke-width="1.7"/></svg>
<div style="position:absolute;left:591.20px;top:331.66px;width:32.50px;height:22.2px;background:#c1d845;"></div>
<div style="position:absolute;left:623.70px;top:331.66px;width:96.69px;height:22.2px;background:#74b8d9;"></div>
<div style="position:absolute;left:624px;top:331.66px;width:1px;height:22.2px;background:#5a9639;"></div>
<div style="position:absolute;left:623.00px;top:331.66px;width:1.5px;height:22.2px;background:rgba(30,60,80,0.12);"></div>
<div style="position:absolute;left:655.10px;top:331.66px;width:1.5px;height:22.2px;background:rgba(30,60,80,0.12);"></div>
<div style="position:absolute;left:687.20px;top:331.66px;width:1.5px;height:22.2px;background:rgba(30,60,80,0.12);"></div>
<svg style="position:absolute;left:647.83px;top:337.16px" width="12" height="12" viewBox="0 0 12 12"><circle cx="6" cy="6" r="3.55" fill="#889a86" stroke="#fff" stroke-width="1.7"/></svg>
<div style="position:absolute;left:591.20px;top:357.05px;width:32.50px;height:22.2px;background:#c1d845;"></div>
<div style="position:absolute;left:623.70px;top:357.05px;width:161.01px;height:22.2px;background:#74b8d9;"></div>
<div style="position:absolute;left:624px;top:357.05px;width:1px;height:22.2px;background:#5a9639;"></div>
<div style="position:absolute;left:623.00px;top:357.05px;width:1.5px;height:22.2px;background:rgba(30,60,80,0.12);"></div>
<div style="position:absolute;left:655.10px;top:357.05px;width:1.5px;height:22.2px;background:rgba(30,60,80,0.12);"></div>
<div style="position:absolute;left:687.20px;top:357.05px;width:1.5px;height:22.2px;background:rgba(30,60,80,0.12);"></div>
<div style="position:absolute;left:719.30px;top:357.05px;width:1.5px;height:22.2px;background:rgba(30,60,80,0.12);"></div>
<div style="position:absolute;left:751.40px;top:357.05px;width:1.5px;height:22.2px;background:rgba(30,60,80,0.12);"></div>
<svg style="position:absolute;left:632.10px;top:362.55px" width="12" height="12" viewBox="0 0 12 12"><circle cx="6" cy="6" r="3.55" fill="#889a86" stroke="#fff" stroke-width="1.7"/></svg>
<div style="position:absolute;left:591.20px;top:382.44px;width:80.65px;height:22.2px;background:#c1d845;"></div>
<div style="position:absolute;left:671.85px;top:382.44px;width:145.02px;height:22.2px;background:#74b8d9;"></div>
<div style="position:absolute;left:672px;top:382.44px;width:1px;height:22.2px;background:#5a9639;"></div>
<div style="position:absolute;left:623.00px;top:382.44px;width:1.5px;height:22.2px;background:rgba(30,60,80,0.12);"></div>
<div style="position:absolute;left:655.10px;top:382.44px;width:1.5px;height:22.2px;background:rgba(30,60,80,0.12);"></div>
<div style="position:absolute;left:687.20px;top:382.44px;width:1.5px;height:22.2px;background:rgba(30,60,80,0.12);"></div>
<div style="position:absolute;left:719.30px;top:382.44px;width:1.5px;height:22.2px;background:rgba(30,60,80,0.12);"></div>
<div style="position:absolute;left:751.40px;top:382.44px;width:1.5px;height:22.2px;background:rgba(30,60,80,0.12);"></div>
<div style="position:absolute;left:783.50px;top:382.44px;width:1.5px;height:22.2px;background:rgba(30,60,80,0.12);"></div>
<svg style="position:absolute;left:622.47px;top:387.94px" width="12" height="12" viewBox="0 0 12 12"><circle cx="6" cy="6" r="3.55" fill="#889a86" stroke="#fff" stroke-width="1.7"/></svg>
<div style="position:absolute;left:591.20px;top:407.83px;width:100.87px;height:22.2px;background:#c1d845;"></div>
<div style="position:absolute;left:692.07px;top:407.83px;width:189.12px;height:22.2px;background:#74b8d9;"></div>
<div style="position:absolute;left:692px;top:407.83px;width:1px;height:22.2px;background:#5a9639;"></div>
<div style="position:absolute;left:623.00px;top:407.83px;width:1.5px;height:22.2px;background:rgba(30,60,80,0.12);"></div>
<div style="position:absolute;left:655.10px;top:407.83px;width:1.5px;height:22.2px;background:rgba(30,60,80,0.12);"></div>
<div style="position:absolute;left:687.20px;top:407.83px;width:1.5px;height:22.2px;background:rgba(30,60,80,0.12);"></div>
<div style="position:absolute;left:719.30px;top:407.83px;width:1.5px;height:22.2px;background:rgba(30,60,80,0.12);"></div>
<div style="position:absolute;left:751.40px;top:407.83px;width:1.5px;height:22.2px;background:rgba(30,60,80,0.12);"></div>
<div style="position:absolute;left:783.50px;top:407.83px;width:1.5px;height:22.2px;background:rgba(30,60,80,0.12);"></div>
<div style="position:absolute;left:815.60px;top:407.83px;width:1.5px;height:22.2px;background:rgba(30,60,80,0.12);"></div>
<div style="position:absolute;left:847.70px;top:407.83px;width:1.5px;height:22.2px;background:rgba(30,60,80,0.12);"></div>
<svg style="position:absolute;left:617.66px;top:413.33px" width="12" height="12" viewBox="0 0 12 12"><circle cx="6" cy="6" r="3.55" fill="#889a86" stroke="#fff" stroke-width="1.7"/></svg>
<div style="position:absolute;left:591.20px;top:433.22px;width:16.45px;height:22.2px;background:#c1d845;"></div>
<div style="position:absolute;left:607.65px;top:433.22px;width:32.34px;height:22.2px;background:#74b8d9;"></div>
<div style="position:absolute;left:608px;top:433.22px;width:1px;height:22.2px;background:#5a9639;"></div>
<div style="position:absolute;left:623.00px;top:433.22px;width:1.5px;height:22.2px;background:rgba(30,60,80,0.12);"></div>
<svg style="position:absolute;left:609.63px;top:438.72px" width="12" height="12" viewBox="0 0 12 12"><circle cx="6" cy="6" r="3.55" fill="#889a86" stroke="#fff" stroke-width="1.7"/></svg>
<div style="position:absolute;left:591.20px;top:458.61px;width:16.45px;height:22.2px;background:#c1d845;"></div>
<div style="position:absolute;left:607.65px;top:458.61px;width:32.34px;height:22.2px;background:#74b8d9;"></div>
<div style="position:absolute;left:608px;top:458.61px;width:1px;height:22.2px;background:#5a9639;"></div>
<div style="position:absolute;left:623.00px;top:458.61px;width:1.5px;height:22.2px;background:rgba(30,60,80,0.12);"></div>
<svg style="position:absolute;left:606.42px;top:464.11px" width="12" height="12" viewBox="0 0 12 12"><circle cx="6" cy="6" r="3.55" fill="#889a86" stroke="#fff" stroke-width="1.7"/></svg>
<div style="position:absolute;left:591.20px;top:484.00px;width:16.45px;height:22.2px;background:#c1d845;"></div>
<div style="position:absolute;left:607.65px;top:484.00px;width:32.34px;height:22.2px;background:#74b8d9;"></div>
<div style="position:absolute;left:608px;top:484.00px;width:1px;height:22.2px;background:#5a9639;"></div>
<div style="position:absolute;left:623.00px;top:484.00px;width:1.5px;height:22.2px;background:rgba(30,60,80,0.12);"></div>
<svg style="position:absolute;left:601.93px;top:489.50px" width="12" height="12" viewBox="0 0 12 12"><circle cx="6" cy="6" r="3.55" fill="#889a86" stroke="#fff" stroke-width="1.7"/></svg>
<div style="position:absolute;left:591.20px;top:509.39px;width:16.45px;height:22.2px;background:#c1d845;"></div>
<div style="position:absolute;left:607.65px;top:509.39px;width:32.34px;height:22.2px;background:#74b8d9;"></div>
<div style="position:absolute;left:608px;top:509.39px;width:1px;height:22.2px;background:#5a9639;"></div>
<div style="position:absolute;left:623.00px;top:509.39px;width:1.5px;height:22.2px;background:rgba(30,60,80,0.12);"></div>
<svg style="position:absolute;left:602.57px;top:514.89px" width="12" height="12" viewBox="0 0 12 12"><circle cx="6" cy="6" r="3.55" fill="#889a86" stroke="#fff" stroke-width="1.7"/></svg>
<div style="position:absolute;left:591.20px;top:534.78px;width:16.45px;height:22.2px;background:#c1d845;"></div>
<div style="position:absolute;left:607.65px;top:534.78px;width:32.34px;height:22.2px;background:#74b8d9;"></div>
<div style="position:absolute;left:608px;top:534.78px;width:1px;height:22.2px;background:#5a9639;"></div>
<div style="position:absolute;left:623.00px;top:534.78px;width:1.5px;height:22.2px;background:rgba(30,60,80,0.12);"></div>
<svg style="position:absolute;left:598.08px;top:540.28px" width="12" height="12" viewBox="0 0 12 12"><circle cx="6" cy="6" r="3.55" fill="#889a86" stroke="#fff" stroke-width="1.7"/></svg>
<div style="position:absolute;left:591.20px;top:560.17px;width:16.45px;height:22.2px;background:#c1d845;"></div>
<div style="position:absolute;left:607.65px;top:560.17px;width:32.34px;height:22.2px;background:#74b8d9;"></div>
<div style="position:absolute;left:608px;top:560.17px;width:1px;height:22.2px;background:#5a9639;"></div>
<div style="position:absolute;left:623.00px;top:560.17px;width:1.5px;height:22.2px;background:rgba(30,60,80,0.12);"></div>
<svg style="position:absolute;left:592.94px;top:565.67px" width="12" height="12" viewBox="0 0 12 12"><circle cx="6" cy="6" r="3.55" fill="#889a86" stroke="#fff" stroke-width="1.7"/></svg>
<div class="t" style="left:734.00px;top:608.42px;font-size:8.5px;line-height:8.5px;color:#909399;font-weight:400;">ATTACH RATE</div>
<div style="position:absolute;left:735.40px;top:627.30px;width:8.2px;height:8.2px;border-radius:50%;background:#6db6da"></div>
<div class="t" style="left:749.80px;top:627.56px;font-size:8.1px;line-height:8.1px;color:#8f9298;font-weight:400;">Deals</div>
<div style="position:absolute;left:788.10px;top:627.30px;width:8.2px;height:8.2px;border-radius:50%;background:#c3d745"></div>
<div class="t" style="left:802.50px;top:627.56px;font-size:8.1px;line-height:8.1px;color:#8f9298;font-weight:400;">SSPT Attached</div>
<div style="position:absolute;left:876.00px;top:627.30px;width:8.2px;height:8.2px;border-radius:50%;background:#6f978a"></div>
<div class="t" style="left:890.10px;top:627.56px;font-size:8.1px;line-height:8.1px;color:#8f9298;font-weight:400;">Attach Rate</div>
</body></html>
